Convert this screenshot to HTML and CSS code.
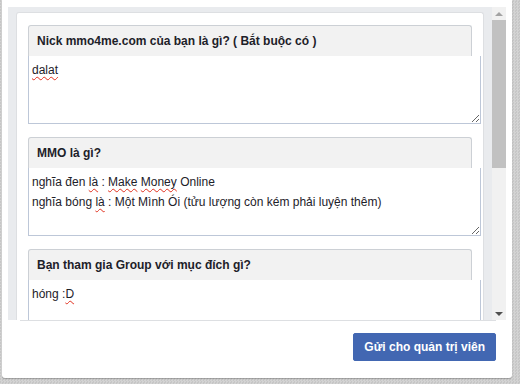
FILE: index.html
```html
<!DOCTYPE html>
<html lang="vi">
<head>
  <meta charset="UTF-8" />
  <meta name="viewport" content="width=device-width, initial-scale=1.0"/>
  <title>Câu hỏi tham gia nhóm</title>
  <link rel="stylesheet" href="styles.css">
</head>
<body>
  <div class="dialog">
    <div class="scroller">
      <div class="viewport">
        <div class="sheet">
          <div class="question">
            <div class="question-title">Nick mmo4me.com của bạn là gì? ( Bắt buộc có )</div>
            <div class="answer"><span class="typo">dalat</span></div>
          </div>
          <div class="question">
            <div class="question-title">MMO là gì?</div>
            <div class="answer">nghĩa đen <span class="typo">là</span> : <span class="typo">Make</span> <span class="typo">Money</span> Online<br>nghĩa bóng <span class="typo">là</span> : Một Mình Ói (tửu lượng còn kém phải luyện thêm)</div>
          </div>
          <div class="question">
            <div class="question-title">Bạn tham gia Group với mục đích gì?</div>
            <div class="answer">hóng :<span class="typo">D</span></div>
          </div>
        </div>
      </div>
      <div class="scrollbar">
        <div class="scroll-btn"><span class="arrow-up"></span></div>
        <div class="scroll-track"><div class="scroll-thumb"></div></div>
        <div class="scroll-btn"><span class="arrow-down"></span></div>
      </div>
    </div>
    <div class="footer">
      <button class="send" type="button">Gửi cho quản trị viên</button>
    </div>
  </div>
</body>
</html>
```

FILE: styles.css
```css
* { margin: 0; padding: 0; box-sizing: border-box; }
html, body { height: 384px; overflow: hidden; }
body { font-family: Helvetica, "Liberation Sans", Arial, sans-serif; font-size: 12px; color: #1d2129; background: repeating-conic-gradient(#d3d3d3 0 25%, #c6c6c6 0 50%) 0 0 / 3px 3px; }

.dialog { width: 510px; height: 378px; margin-left: 2px; background: #fff; border-radius: 0 0 3px 3px; box-shadow: 0 1px 1px rgba(0,0,0,0.25); display: flex; flex-direction: column; }

/* scroll area with a classic scrollbar */
.scroller { height: 313px; margin: 7px 6px 0; background: #e9ebee; display: flex; }
.viewport { flex: 1; overflow: hidden; }
.scrollbar { width: 14px; background: #f1f1f1; display: flex; flex-direction: column; }
.scroll-btn { height: 13px; display: flex; align-items: center; justify-content: center; }
.arrow-up { border: 4px solid transparent; border-top: 0; border-bottom: 4px solid #a3a3a3; }
.arrow-down { border: 4px solid transparent; border-bottom: 0; border-top: 4px solid #505050; }
.scroll-track { flex: 1; }
.scroll-thumb { height: 148px; background: #c1c1c1; }

.sheet { margin: 5px 8px 0; height: 320px; background: #fff; border: 1px solid #dddfe2; border-bottom: 0; border-radius: 3px 3px 0 0; padding: 12px 11px 0; }

.question { margin-bottom: 13px; }
.question-title { height: 31px; line-height: 30px; padding: 0 8px; background: #f2f2f2; border: 1px solid #ccd0d5; border-bottom: 0; border-radius: 3px 3px 0 0; font-weight: bold; color: #1d2129; white-space: nowrap; }
.answer { width: calc(100% + 9px); height: 68px; padding: 4px 3px 0; border: 1px solid #bdc7d8; border-top: 0; background: #fff; line-height: 20px; overflow: auto; resize: vertical; }
.typo { text-decoration: underline wavy #e0301e; text-decoration-thickness: 1px; text-underline-offset: 2px; text-decoration-skip-ink: none; }

.footer { flex: 1; margin: 0 16px 0 18px; border-top: 1px solid #dddfe2; padding-top: 12px; display: flex; justify-content: flex-end; align-items: flex-start; }
.send { height: 28px; padding: 0 10px; background: #4267b2; border: 1px solid #4267b2; border-radius: 2px; color: #fff; font: bold 12px Helvetica, "Liberation Sans", Arial, sans-serif; cursor: pointer; }
```
